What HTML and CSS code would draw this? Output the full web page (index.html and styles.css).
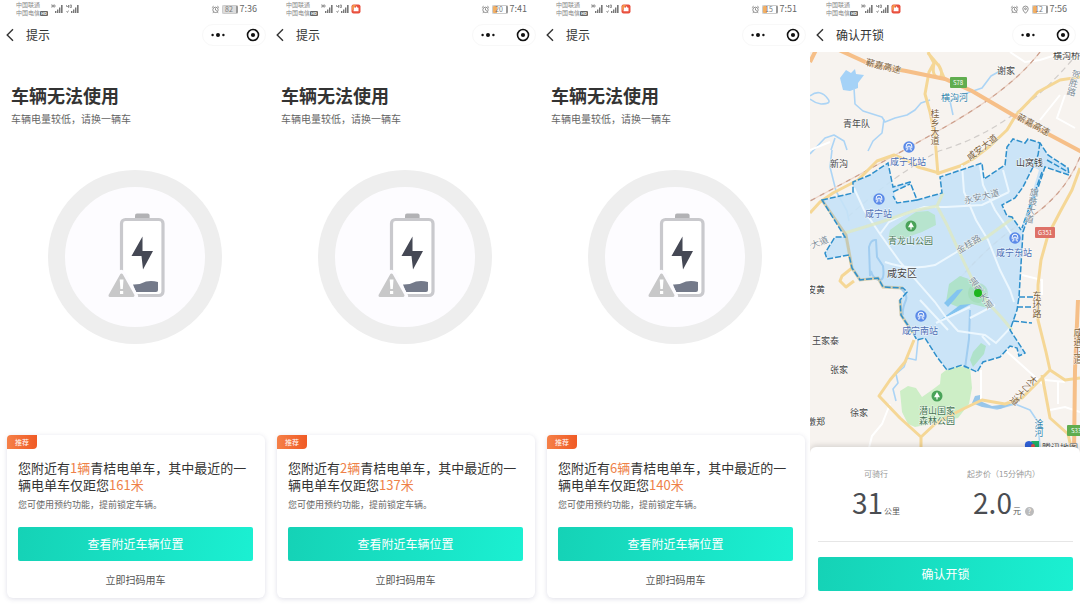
FILE: index.html
```html
<!DOCTYPE html>
<html lang="zh-CN">
<head>
<meta charset="utf-8">
<meta name="viewport" content="width=device-width, initial-scale=1">
<title>青桔电单车</title>
<link rel="stylesheet" href="styles.css">
</head>
<body>
<svg class="sprite" aria-hidden="true">
  <symbol id="signal" viewBox="0 0 30 10">
    <g fill="#777"><rect x="5" y="7" width="1.400" height="2"/><rect x="7" y="5.500" width="1.400" height="3.500"/><rect x="9" y="3.500" width="1.400" height="5.500"/><rect x="11" y="1" width="1.600" height="8"/>
    <rect x="21" y="7" width="1.400" height="2"/><rect x="23" y="5.500" width="1.400" height="3.500"/><rect x="25" y="3.500" width="1.400" height="5.500"/><rect x="27" y="1" width="1.600" height="8"/></g>
    <path d="M1 1h1.500v2H1m2.500-2h1.500v2h-1.500zM16.500 1v1.500h2V1v3M20 1h1.500v2.500H20zM16.500 7l1 1.500 1-2" fill="none" stroke="#777" stroke-width=".7"/>
  </symbol>
  <symbol id="app" viewBox="0 0 10 10">
    <rect x=".5" y=".5" width="9" height="9" rx="2" fill="#e9503f"/><path d="M1 7V2.500Q1 1 2.500 1H5z" fill="#f39a4b"/><path d="M3 3.200l1.600.6L5.500 2l.7 1.600 1.300.2v3.400h-5z" fill="#fff"/>
  </symbol>
  <symbol id="alarm" viewBox="0 0 10 10">
    <g fill="none" stroke="#666" stroke-width=".8"><circle cx="5" cy="5.400" r="3"/><path d="M1 3L3 1.200M9 3L7 1.200M5 3.600v2l1.400.7M2.800 8L2 9M7.200 8L8 9"/></g>
  </symbol>
  <symbol id="place" viewBox="0 0 10 10">
    <g fill="none" stroke="#666" stroke-width=".8"><path d="M5 9.200Q2 6.500 2 4.200a3 3 0 0 1 6 0Q8 6.500 5 9.200z"/><circle cx="5" cy="4.200" r="1"/></g>
  </symbol>
  <symbol id="back" viewBox="0 0 8 14"><path d="M7 1.200L1.200 7 7 12.800" fill="none" stroke="#333" stroke-width="1.400"/></symbol>
  <symbol id="more" viewBox="0 0 14 6"><circle cx="1.600" cy="3" r="1.200" fill="#111"/><circle cx="7" cy="3" r="2" fill="#111"/><circle cx="12.400" cy="3" r="1.200" fill="#111"/></symbol>
  <symbol id="close" viewBox="0 0 14 14"><circle cx="7" cy="7" r="5.500" fill="none" stroke="#111" stroke-width="1.600"/><circle cx="7" cy="7" r="2.100" fill="#111"/></symbol>
  <symbol id="lowbattery" viewBox="0 0 174 174">
    <circle cx="87" cy="87" r="78.500" fill="#fdfcff" stroke="#eee" stroke-width="17"/>
    <path d="M87 48.500v-3q0-2 2-2h10.600q2 0 2 2v3z" fill="#b2b2b5"/>
    <rect x="73.500" y="49.500" width="41.500" height="76" rx="4" fill="#fff" stroke="#c9c9cd" stroke-width="3.200"/>
    <path d="M94.500 66.500L83.500 86h10l1.500 13.500L105 81H94.500z" fill="#454854"/>
    <path d="M85 114.500q7 .3 13-3 6-1.500 12 .6v8q0 2-2 2H88z" fill="#747a8a"/>
    <path d="M73.500 104L86 126H61z" fill="#fdfcff" stroke="#fdfcff" stroke-width="8" stroke-linejoin="round"/>
    <path d="M73.500 105L85 125.500H62z" fill="#c8c8c9" stroke="#c8c8c9" stroke-width="3" stroke-linejoin="round"/>
    <path d="M71.700 109.500h3.800l-.7 9.500h-2.400zM72 121h3.200v3H72z" fill="#fff"/>
  </symbol>
  <symbol id="station" viewBox="0 0 12 12"><circle cx="6" cy="6" r="5.700" fill="#5b8ae8"/><path d="M3.200 7.400V5a2.800 2.800 0 0 1 5.600 0v2.400M4.800 8.700V5.200h2.400v3.500M3 8.900h1.500M7.500 8.900H9" fill="none" stroke="#fff" stroke-width="1"/></symbol>
  <symbol id="tree" viewBox="0 0 12 12"><circle cx="6" cy="6" r="5.500" fill="#4aa359"/><path d="M6 2L9 7.200H6.600v2.200H5.400V7.200H3z" fill="#fff"/></symbol>
</svg>

<main class="phones">
  <section class="phone">
    <div class="status">
      <div class="carriers"><span>中国联通</span><span>中国电信<b class="hd">HD</b></span></div>
      <svg class="signal"><use href="#signal"/></svg>
      <div class="clock"><svg class="glyph"><use href="#alarm"/></svg><span class="battery">82</span><time>7:36</time></div>
    </div>
    <header class="nav">
      <button class="back" aria-label="返回"><svg><use href="#back"/></svg></button>
      <h1>提示</h1>
      <div class="capsule"><button aria-label="更多"><svg class="more"><use href="#more"/></svg></button><button aria-label="关闭"><svg class="close"><use href="#close"/></svg></button></div>
    </header>
    <div class="notice"><h2>车辆无法使用</h2><p>车辆电量较低，请换一辆车</p></div>
    <svg class="ring" role="img" aria-label="电量较低"><use href="#lowbattery"/></svg>
    <article class="card">
      <span class="tag">推荐</span>
      <div class="card-body">
        <h3>您附近有<em>1辆</em>青桔电单车，其中最近的一辆电单车仅距您<em>161米</em></h3>
        <p>您可使用预约功能，提前锁定车辆。</p>
        <button class="primary">查看附近车辆位置</button>
        <button class="plain">立即扫码用车</button>
      </div>
    </article>
  </section>

  <section class="phone">
    <div class="status">
      <div class="carriers"><span>中国联通</span><span>中国电信<b class="hd">HD</b></span></div>
      <svg class="signal"><use href="#signal"/></svg><svg class="app"><use href="#app"/></svg>
      <div class="clock"><svg class="glyph"><use href="#alarm"/></svg><span class="battery low">20</span><time>7:41</time></div>
    </div>
    <header class="nav">
      <button class="back" aria-label="返回"><svg><use href="#back"/></svg></button>
      <h1>提示</h1>
      <div class="capsule"><button aria-label="更多"><svg class="more"><use href="#more"/></svg></button><button aria-label="关闭"><svg class="close"><use href="#close"/></svg></button></div>
    </header>
    <div class="notice"><h2>车辆无法使用</h2><p>车辆电量较低，请换一辆车</p></div>
    <svg class="ring" role="img" aria-label="电量较低"><use href="#lowbattery"/></svg>
    <article class="card">
      <span class="tag">推荐</span>
      <div class="card-body">
        <h3>您附近有<em>2辆</em>青桔电单车，其中最近的一辆电单车仅距您<em>137米</em></h3>
        <p>您可使用预约功能，提前锁定车辆。</p>
        <button class="primary">查看附近车辆位置</button>
        <button class="plain">立即扫码用车</button>
      </div>
    </article>
  </section>

  <section class="phone">
    <div class="status">
      <div class="carriers"><span>中国联通</span><span>中国电信<b class="hd">HD</b></span></div>
      <svg class="signal"><use href="#signal"/></svg><svg class="app"><use href="#app"/></svg>
      <div class="clock"><svg class="glyph"><use href="#alarm"/></svg><span class="battery low">15</span><time>7:51</time></div>
    </div>
    <header class="nav">
      <button class="back" aria-label="返回"><svg><use href="#back"/></svg></button>
      <h1>提示</h1>
      <div class="capsule"><button aria-label="更多"><svg class="more"><use href="#more"/></svg></button><button aria-label="关闭"><svg class="close"><use href="#close"/></svg></button></div>
    </header>
    <div class="notice"><h2>车辆无法使用</h2><p>车辆电量较低，请换一辆车</p></div>
    <svg class="ring" role="img" aria-label="电量较低"><use href="#lowbattery"/></svg>
    <article class="card">
      <span class="tag">推荐</span>
      <div class="card-body">
        <h3>您附近有<em>6辆</em>青桔电单车，其中最近的一辆电单车仅距您<em>140米</em></h3>
        <p>您可使用预约功能，提前锁定车辆。</p>
        <button class="primary">查看附近车辆位置</button>
        <button class="plain">立即扫码用车</button>
      </div>
    </article>
  </section>

  <section class="phone">
    <div class="status">
      <div class="carriers"><span>中国联通</span><span>中国电信<b class="hd">HD</b></span></div>
      <svg class="signal"><use href="#signal"/></svg><svg class="app"><use href="#app"/></svg>
      <div class="clock"><svg class="glyph"><use href="#alarm"/></svg><svg class="glyph"><use href="#place"/></svg><span class="battery low">12</span><time>7:56</time></div>
    </div>
    <header class="nav">
      <button class="back" aria-label="返回"><svg><use href="#back"/></svg></button>
      <h1>确认开锁</h1>
      <div class="capsule"><button aria-label="更多"><svg class="more"><use href="#more"/></svg></button><button aria-label="关闭"><svg class="close"><use href="#close"/></svg></button></div>
    </header>
    <div class="map">
      <svg viewBox="0 52 270 404" preserveAspectRatio="xMidYMin slice" role="img" aria-label="地图">
        <rect y="52" width="270" height="410" fill="#f7f3ef"/>
        <!-- park -->
        <path d="M90 391L98 386 106 388 112 397 122 390 130 384 131 374 140 367 160 366 162 388 159 404 148 418 120 424 105 427 98 424 92 412z" fill="#cdeec6"/>
        <!-- water -->
        <path d="M30 78l6-8 5 3 4-4 1 5 8 1-6 8v5l-8 3-7-1z" fill="#a5d2f7"/>
        <g fill="none" stroke="#acd4f5" stroke-width="1.600" stroke-linejoin="round">
          <path d="M44 88l1 16 8 7 19 6 3 5 10-4 12-3 8-5 6-7 9-3M74 119l-2 14-9 8-5 10M0 96q10-8 18 3 4 5-7 5-6-1-11-5M0 154l15-16 9-3 10 6 3 9M22 150l-2 17 6 24 11 20 2 10M25 138l-4 12"/>
          <path d="M108 340l-2 20-9-2-3 9-8 7 2 9-5 6 3 12M172 406l15 3 18-5 15 6 8 12 2 26M143 115l-3-14 17-8 15-5 9-12 9-5"/>
        </g>
        <path d="M162 403L165 396 170 395V401L182 406 205 403 190 409 172 407z" fill="#98c6ea"/>
        <!-- minor roads -->
        <g fill="none" stroke="#fff" stroke-width="2">
          <path d="M200 52l15 10 15-2 25-8M230 120l20-25M171 370v30M80 404l-8 20-10 12-5 20M235 380l20 2M240 410l15-3 15 5M248 382v22M212 275l20 5 0 15M255 95l-8 23 18 10M0 150l20-8M195 350l40 36"/>
        </g>
        <!-- railways -->
        <g fill="none" stroke-width="1.200">
          <path d="M230 52q-28 37-95 75-54 31-135 74M270 157q-16 40-58 66-28 17-62 55" stroke="#ecd3c6"/>
          <path d="M230 52q-28 37-95 75-54 31-135 74M270 157q-16 40-58 66-28 17-62 55" stroke="#cb9f8d" stroke-dasharray="5 5"/>
          <path d="M262 60q-60 70-133 91-45 24-90 65" stroke="#d1cdca" stroke-dasharray="6 4"/>
        </g>
        <!-- arterial roads -->
        <g fill="none" stroke="#f5d796" stroke-width="3" stroke-linejoin="round">
          <path d="M118 52L124 63 119 72 115 94 120 112 125 137 128 175M118 53L129 66 135 80M124 64q-3 13 6 14 4-5-2-14M270 77L250 80 228 92 206 115 197 130 180 146 163 159 150 166 129 173 108 167 96 160 84 155 67 161 48 180 23 193 10 202 0 213"/>
          <path d="M104 340L95 362 80 380 69 396 90 418 111 437 126 423 153 409 172 400 195 404 212 398 240 370 255 380 270 378M111 437v22M270 168L262 190 250 212 238 235 231 260 228 285 228 320 236 352 240 370M232 375L240 418 258 434 263 456M35 236L40 258 42 268 32 276 30 281 36 287 44 281"/>
        </g>
        <g fill="none" stroke="#f6bf88" stroke-width="4"><path d="M29 50L62 65 96 71 135 79 162 91 210 119 272 152M268 300l-3 70-1 86M0 62l6-12"/></g>
        <!-- service area -->
        <path d="M12 200L43 193V182L60 175 78 163 83 187 100 182 107 200 132 193 130 177 172 163 174 179 195 165 197 147 203 139 215 143 218 139 230 143 238 155 258 168 259 175 235 167 213 232 209 297 207 310 200 330 215 353 209 356 207 348 200 346 190 357 173 362 167 372 152 365 137 370 127 357 115 338 107 340 103 333 91 315 90 300 97 292 93 288 73 287 68 278 50 280 42 268 39 255 17 259 15 253 25 237 35 237z" fill="#c5e2f7" fill-opacity=".9"/>
        <path d="M223 167L213 187 205 198 192 205 197 216 202 217 211 230 229 170zM84 192L100 184 106 199 87 203z" fill="#f7f3ef"/>
        <!-- parks and water within the area -->
        <path d="M80 230L91 222 106 212 118 211 125 215 126 225 112 232 95 238 78 240z" fill="#b7e4ce"/>
        <path d="M139 284L150 276 162 280 170 296 180 300 178 308 162 304 148 307 136 302zM160 360L163 352 171 343 176 346 174 354 163 367z" fill="#afe2ca"/>
        <path d="M134 303L147 290 153 289 145 299 138 307zM125 324L150 305 161 304 148 311z" fill="#83c4f0"/>
        <g fill="none" stroke="#a1cdf0" stroke-width="2"><path d="M60 276l-1-29q2-8 7-7l1 17 6 9q2 15-4 14-6-1-8-9zM160 310l-1 29-4 29M90 288q8 6 6 12-4 9-3 15"/></g>
        <!-- streets within the area -->
        <g fill="none" stroke="#ecf7fe" stroke-width="2">
          <path d="M44 188L54 210 70 234 90 262 125 302 138 320 148 331 175 335 186 343 205 323M70 234L79 222 95 214 114 207 136 207 172 205 199 192M75 262Q100 271 125 265L150 250 170 238M152 165L154 192 166 220 178 240 190 270 200 290 204 302M170 165L173 185 185 210 202 235M160 318L185 305M110 300L138 330M126 323L160 307M180 345L172 336M193 170L199 192"/>
        </g>
        <path d="M35 233L71 222 103 211 127 206 133 193M127 206L137 225 152 258 165 285 180 305 192 318 202 330M152 250L177 237 203 218" fill="none" stroke="#dde9c3" stroke-width="3" stroke-opacity=".8"/>
        <path d="M12 200L36 235 42 268 50 280 68 278 73 287 93 288M90 300L91 315 103 333" fill="none" stroke="#c9bf95" stroke-width="3" stroke-opacity=".7"/>
        <g fill="none" stroke="#2e8fcb" stroke-width="1.500" stroke-dasharray="6 2">
          <path d="M12 200L43 193V182L60 175 78 163 83 187 100 182 107 200 132 193 130 177 172 163 174 179 195 165 197 147 203 139 215 143 218 139 230 143 238 155 258 168 259 175 235 167 213 232 209 297 207 310 200 330 215 353 209 356 207 348 200 346 190 357 173 362 167 372 152 365 137 370 127 357 115 338 107 340 103 333 91 315 90 300 97 292 93 288 73 287 68 278 50 280 42 268 39 255 17 259 15 253 25 237 35 237z"/>
          <path d="M223 167L213 187 205 198 192 205 197 216 202 217 211 230M83 192L100 184M107 200L87 203 83 196M209 297H225M207 307H223M203 321L222 323M230 143L228 155 223 167M232 172L212 228M237 160L258 172"/>
        </g>
        <!-- markers -->
        <use href="#station" x="93" y="141" width="12" height="12"/><use href="#station" x="63" y="193" width="12" height="12"/><use href="#station" x="199" y="232" width="12" height="12"/><use href="#station" x="105" y="310" width="12" height="12"/>
        <use href="#tree" x="95" y="220" width="12" height="12"/><use href="#tree" x="121" y="390" width="12" height="12"/>
        <circle cx="168" cy="293" r="10" fill="#9bd9ae" fill-opacity=".5"/>
        <rect x="140" y="77" width="17" height="11" rx="1" fill="#60ad4f"/><rect x="225" y="227" width="20" height="11" rx="1" fill="#de7167"/><rect x="257" y="425" width="18" height="11" rx="1" fill="#60ad4f"/>
        <g class="shield"><text x="148" y="85">S78</text><text x="235" y="235">G351</text><text x="266" y="433">S33</text></g>
        <g class="place">
          <text x="187" y="74">谢家</text><text x="243" y="59">横沟桥</text><text x="33" y="127">青年队</text><text x="20" y="167">新沟</text><text x="206" y="166">山窝钱</text><text x="-3" y="293">皮黄</text><text x="2" y="344">王家泰</text><text x="20" y="373">张家</text><text x="40" y="416">徐家</text><text x="-3" y="425">墩郑</text>
          <text class="district" x="77" y="277">咸安区</text>
        </g>
        <g class="park"><text x="78" y="244">青龙山公园</text><text x="109" y="414">潜山国家</text><text x="109" y="424">森林公园</text></g>
        <g class="rail"><text x="80" y="165">咸宁北站</text><text x="55" y="217">咸宁站</text><text x="186" y="256">咸宁东站</text><text x="92" y="334">咸宁南站</text></g>
        <g class="river"><text x="131" y="101">横沟河</text><text class="down" x="229" y="419">淦河</text></g>
        <g class="road">
          <text transform="translate(55 65) rotate(14)">蕲嘉高速</text><text transform="translate(206 119) rotate(28)">蕲嘉高速</text><text class="down" x="125" y="109">桂乡大道</text><text transform="translate(160 161) rotate(-38)">咸安大道</text><text class="down" transform="translate(226 377) rotate(42)">太乙大道</text><text class="down" x="227" y="291">东环路</text><text class="down" x="268" y="328">咸通卫道</text>
        </g>
        <g class="street"><text transform="translate(155 204) rotate(-14)">永安大道</text><text transform="translate(149 254) rotate(-32)">金桂路</text><text transform="translate(-6 252) rotate(-22)">宁大道</text><text class="down" transform="translate(161 278) rotate(-34)">温泉大道</text><text class="down" transform="translate(267 70) rotate(14)">贺胜路</text><text class="down" transform="translate(225 188) rotate(10)">旗鼓大道</text></g>
        <circle cx="168" cy="293" r="4" fill="#1eb51e"/>
        <!-- map provider -->
        <path d="M215 447q-1-6 4-6 3 0 5 3l4 4h-12z" fill="#2f60d8"/><path d="M221 441h8v6l-3 1z" fill="#20ad68"/><circle cx="223" cy="446" r="2" fill="#e84e42"/>
        <text class="brand" x="232" y="451">腾讯地图</text>
      </svg>
    </div>
    <div class="panel">
      <dl class="stats">
        <div><dt>可骑行</dt><dd><strong>31</strong>公里</dd></div>
        <div><dt>起步价（15分钟内）</dt><dd><strong>2.0</strong>元<button class="help" aria-label="计价说明">?</button></dd></div>
      </dl>
      <button class="primary">确认开锁</button>
    </div>
  </section>
</main>
</body>
</html>
```
FILE: styles.css
```css
* { box-sizing: border-box; margin: 0; padding: 0; }

body {
  background: #fff;
  color: #333;
  font-family: "Noto Sans CJK SC", sans-serif;
  font-size: 10px;
}

button { border: 0; background: none; color: inherit; font: inherit; cursor: pointer; }
svg { display: block; flex: none; }
.sprite { position: absolute; width: 0; height: 0; }

.phones {
  display: grid;
  grid-template-columns: repeat(4, minmax(0, 1fr));
  min-height: 100vh;
}
.phone { display: flex; flex-direction: column; min-width: 0; overflow: hidden; }

/* status bar */
.status { display: flex; align-items: center; height: 18px; padding: 0 13px 0 16px; }
.carriers { display: flex; flex-direction: column; font-size: 6px; line-height: 8px; color: #888; }
.carriers span { display: flex; align-items: center; }
.hd { padding: 0 1px; border-radius: 1px; background: #666; color: #fff; font-size: 4px; line-height: 5px; }
.signal { width: 30px; height: 10px; margin-left: 2px; }
.app { width: 10px; height: 10px; margin-left: 1px; }
.clock { display: flex; align-items: center; gap: 2px; margin-left: auto; color: #666; font-size: 9px; line-height: 12px; }
.glyph { width: 9px; height: 9px; }
.battery {
  width: 16px;
  border: 1px solid #ccc;
  border-right: 2px solid #999;
  border-radius: 2px;
  background: #ddd;
  color: #777;
  font-size: 7px;
  line-height: 7px;
  text-align: center;
}
.battery.low { background: linear-gradient(90deg, #f2b061 4px, #fff 4px); }

/* navigation bar */
.nav { display: flex; align-items: center; height: 34px; padding: 0 4px 0 6px; }
.back svg { width: 8px; height: 14px; }
.nav h1 { margin-left: 12px; font-size: 12px; font-weight: 400; line-height: 18px; }
.capsule {
  display: flex;
  align-items: center;
  justify-content: space-between;
  width: 64px;
  height: 22px;
  margin-left: auto;
  padding: 0 5px 0 8px;
  border: 1px solid #f8f8f8;
  border-radius: 11px;
}
.more { width: 14px; height: 6px; }
.close { width: 14px; height: 14px; }

/* low battery notice */
.notice { padding: 31px 11px 0; }
.notice h2 { font-size: 18px; font-weight: 700; line-height: 24px; }
.notice p { margin-top: 5px; color: #666; line-height: 14px; }
.ring { width: 174px; height: 174px; margin: 44px auto 32px; }

/* recommendation card */
.card {
  margin: auto 5px 8px 7px;
  border-radius: 6px;
  background: #fff;
  box-shadow: 0 1px 5px rgba(70, 70, 120, .18);
}
.tag {
  display: block;
  width: 30px;
  border-radius: 4px 0 4px 0;
  background: linear-gradient(90deg, #f58048, #f05a24);
  color: #fff;
  font-size: 7px;
  line-height: 14px;
  text-align: center;
}
.card-body { display: flex; flex-direction: column; padding: 10px 12px 0 11px; }
.card h3 { font-size: 13px; font-weight: 400; line-height: 17px; }
.card em { color: #ee8148; font-style: normal; }
.card p { margin: 5px 0 15px; color: #666; font-size: 9px; line-height: 14px; }
.primary {
  width: 100%;
  border-radius: 2px;
  background: linear-gradient(100deg, #15d2b6, #1bf0d2);
  color: #fff;
  font-size: 12px;
  line-height: 34px;
}
.plain { color: #555; line-height: 37px; }

/* map */
.map { position: relative; flex: 1; min-height: 200px; }
.map svg { position: absolute; inset: 0; width: 100%; height: 100%; }
.map text { paint-order: stroke; stroke: #fff; stroke-opacity: .7; stroke-width: 1px; font-size: 9px; }
.place { fill: #444; }
.map .district { font-size: 10px; }
.park { fill: #477554; }
.rail { fill: #4c6fb5; }
.river { fill: #3384ac; }
.road { fill: #7c623c; }
.street { fill: #7e8d98; }
.map .down { writing-mode: vertical-rl; }
.map .shield text { fill: #fff; stroke: none; font-size: 6px; text-anchor: middle; }
.brand { fill: #555; }

/* unlock panel */
.panel {
  position: relative;
  margin-top: -8px;
  padding: 19px 7px 15px 8px;
  border-radius: 6px 6px 0 0;
  background: #fff;
  box-shadow: 0 -2px 5px rgba(0, 0, 0, .12);
}
.stats {
  display: grid;
  grid-template-columns: 116fr 139fr;
  margin-bottom: 15px;
  padding-bottom: 10px;
  border-bottom: 1px solid #e6e6e6;
  text-align: center;
}
.stats dt { color: #999; font-size: 8px; line-height: 16px; }
.stats dd { display: flex; align-items: baseline; justify-content: center; color: #555; font-size: 8px; line-height: 40px; }
.stats strong { margin-right: 1px; color: #4a4d52; font-size: 28px; font-weight: 400; }
.help { width: 9px; height: 9px; margin-left: 4px; border-radius: 50%; background: #bbb; color: #fff; font-size: 7px; line-height: 9px; }
```
